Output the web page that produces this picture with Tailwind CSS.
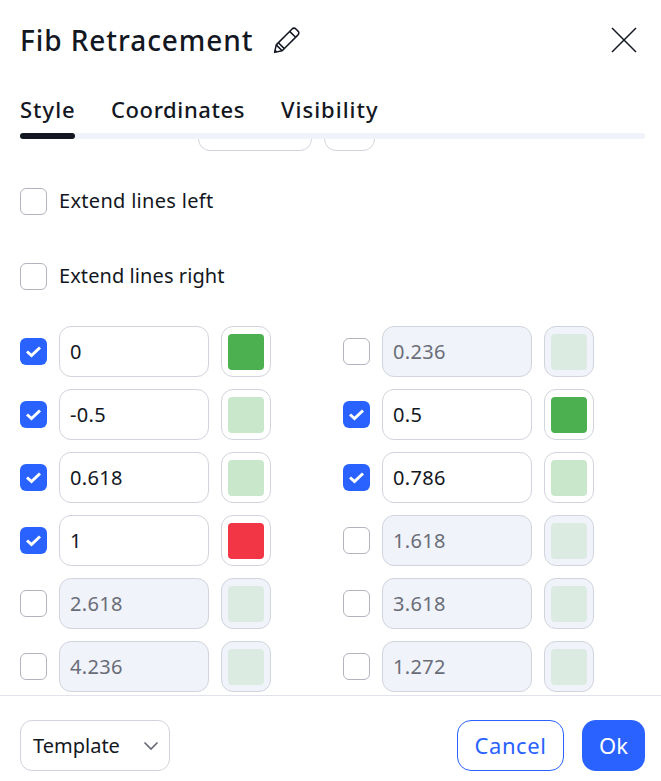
<!doctype html>
<html lang="en">
  <head>
    <meta charset="UTF-8" />
    <title>Fib Retracement</title>
    <script src="https://cdn.jsdelivr.net/npm/@tailwindcss/browser@4"></script>
  </head>
  <body class="bg-white">
    <div class="w-[661px] h-[781px] flex flex-col overflow-hidden bg-white text-[#131722] font-['Noto_Sans',sans-serif]">
      <header class="h-[80px] pl-[20px] pr-[24px] flex items-center shrink-0">
        <h1 class="text-[28px] font-medium tracking-[0.93px]">Fib Retracement</h1>
        <svg class="ml-[20px]" width="28" height="28" viewBox="0 0 26 26" fill="none" stroke="#131722" stroke-width="1.4" stroke-linejoin="round">
          <path d="M1.5 24.5 L3 17.5 L17.5 3 Q19.5 1 21.5 3 L23 4.5 Q25 6.5 23 8.5 L8.5 23 Z" />
          <path d="M3 17.5 L8.5 23 M5 15.5 L10.5 21 M15.5 5 L21 10.5 M1.9 22.5 L3.5 24.1" />
        </svg>
        <svg class="ml-auto" width="26" height="26" viewBox="0 0 26 26" fill="none" stroke="#131722" stroke-width="1.5">
          <path d="M1 1 L25 25 M25 1 L1 25" />
        </svg>
      </header>

      <nav class="shrink-0 pl-[20px] pr-[16px]">
        <div class="flex gap-[36px] h-[53px] pt-[11px] text-[22px] font-medium leading-[36px] tracking-[0.6px]">
          <a class="w-[55px] tracking-[1px]">Style</a>
          <a class="w-[134px]">Coordinates</a>
          <a class="tracking-[1px]">Visibility</a>
        </div>
        <div class="h-[6px] rounded-full bg-[#f0f3fa]">
          <div class="h-full w-[55px] rounded-full bg-[#131722]"></div>
        </div>
      </nav>

      <main class="flex-1 min-h-0 overflow-hidden px-[20px] text-[20px] tracking-[0.3px]">
        <div class="flex gap-[12px] ml-[178px] -mt-[39px] h-[51px]">
          <div class="w-[114px] rounded-[12px] border border-[#d1d4dc]"></div>
          <div class="w-[51px] rounded-[12px] border border-[#d1d4dc]"></div>
        </div>

        <label class="flex items-center gap-[12px] mt-[37px] h-[27px]">
          <span class="w-[27px] h-[27px] rounded-[6px] border border-[#b2b5be] bg-white"></span>
          <span class="pb-[2px]">Extend lines left</span>
        </label>
        <label class="flex items-center gap-[12px] mt-[48px] h-[27px]">
          <span class="w-[27px] h-[27px] rounded-[6px] border border-[#b2b5be] bg-white"></span>
          <span class="pb-[2px] tracking-[0.08px]">Extend lines right</span>
        </label>

        <div class="grid grid-cols-[323px_1fr] gap-y-[12px] mt-[36px]">
          <div class="flex items-center gap-[12px]">
            <span class="w-[27px] h-[27px] rounded-[6px] bg-[#2962ff] flex items-center justify-center">
              <svg width="17" height="13" viewBox="0 0 17 13" fill="none" stroke="white" stroke-width="3"><path d="M2 6.5 L6.5 10.5 L15 2.5" /></svg>
            </span>
            <div class="w-[150px] h-[51px] px-[10px] flex items-center rounded-[12px] border border-[#d1d4dc]">0</div>
            <div class="w-[50px] h-[51px] flex items-center justify-center rounded-[12px] border border-[#d1d4dc]"><span class="w-[36px] h-[36px] rounded-[4px] bg-[#4caf50]"></span></div>
          </div>
          <div class="flex items-center gap-[12px]">
            <span class="w-[27px] h-[27px] rounded-[6px] border border-[#b2b5be] bg-white"></span>
            <div class="w-[150px] h-[51px] px-[10px] flex items-center rounded-[12px] border border-[#d1d4dc] bg-[#f0f3fa] text-[#6a6d78]">0.236</div>
            <div class="w-[50px] h-[51px] flex items-center justify-center rounded-[12px] border border-[#d1d4dc] bg-[#f0f3fa]"><span class="w-[36px] h-[36px] rounded-[4px] bg-[#dcebe1]"></span></div>
          </div>

          <div class="flex items-center gap-[12px]">
            <span class="w-[27px] h-[27px] rounded-[6px] bg-[#2962ff] flex items-center justify-center">
              <svg width="17" height="13" viewBox="0 0 17 13" fill="none" stroke="white" stroke-width="3"><path d="M2 6.5 L6.5 10.5 L15 2.5" /></svg>
            </span>
            <div class="w-[150px] h-[51px] px-[10px] flex items-center rounded-[12px] border border-[#d1d4dc]">-0.5</div>
            <div class="w-[50px] h-[51px] flex items-center justify-center rounded-[12px] border border-[#d1d4dc]"><span class="w-[36px] h-[36px] rounded-[4px] bg-[#c9e7cb]"></span></div>
          </div>
          <div class="flex items-center gap-[12px]">
            <span class="w-[27px] h-[27px] rounded-[6px] bg-[#2962ff] flex items-center justify-center">
              <svg width="17" height="13" viewBox="0 0 17 13" fill="none" stroke="white" stroke-width="3"><path d="M2 6.5 L6.5 10.5 L15 2.5" /></svg>
            </span>
            <div class="w-[150px] h-[51px] px-[10px] flex items-center rounded-[12px] border border-[#d1d4dc]">0.5</div>
            <div class="w-[50px] h-[51px] flex items-center justify-center rounded-[12px] border border-[#d1d4dc]"><span class="w-[36px] h-[36px] rounded-[4px] bg-[#4caf50]"></span></div>
          </div>

          <div class="flex items-center gap-[12px]">
            <span class="w-[27px] h-[27px] rounded-[6px] bg-[#2962ff] flex items-center justify-center">
              <svg width="17" height="13" viewBox="0 0 17 13" fill="none" stroke="white" stroke-width="3"><path d="M2 6.5 L6.5 10.5 L15 2.5" /></svg>
            </span>
            <div class="w-[150px] h-[51px] px-[10px] flex items-center rounded-[12px] border border-[#d1d4dc]">0.618</div>
            <div class="w-[50px] h-[51px] flex items-center justify-center rounded-[12px] border border-[#d1d4dc]"><span class="w-[36px] h-[36px] rounded-[4px] bg-[#c9e7cb]"></span></div>
          </div>
          <div class="flex items-center gap-[12px]">
            <span class="w-[27px] h-[27px] rounded-[6px] bg-[#2962ff] flex items-center justify-center">
              <svg width="17" height="13" viewBox="0 0 17 13" fill="none" stroke="white" stroke-width="3"><path d="M2 6.5 L6.5 10.5 L15 2.5" /></svg>
            </span>
            <div class="w-[150px] h-[51px] px-[10px] flex items-center rounded-[12px] border border-[#d1d4dc]">0.786</div>
            <div class="w-[50px] h-[51px] flex items-center justify-center rounded-[12px] border border-[#d1d4dc]"><span class="w-[36px] h-[36px] rounded-[4px] bg-[#c9e7cb]"></span></div>
          </div>

          <div class="flex items-center gap-[12px]">
            <span class="w-[27px] h-[27px] rounded-[6px] bg-[#2962ff] flex items-center justify-center">
              <svg width="17" height="13" viewBox="0 0 17 13" fill="none" stroke="white" stroke-width="3"><path d="M2 6.5 L6.5 10.5 L15 2.5" /></svg>
            </span>
            <div class="w-[150px] h-[51px] px-[10px] flex items-center rounded-[12px] border border-[#d1d4dc]">1</div>
            <div class="w-[50px] h-[51px] flex items-center justify-center rounded-[12px] border border-[#d1d4dc]"><span class="w-[36px] h-[36px] rounded-[4px] bg-[#f23645]"></span></div>
          </div>
          <div class="flex items-center gap-[12px]">
            <span class="w-[27px] h-[27px] rounded-[6px] border border-[#b2b5be] bg-white"></span>
            <div class="w-[150px] h-[51px] px-[10px] flex items-center rounded-[12px] border border-[#d1d4dc] bg-[#f0f3fa] text-[#6a6d78]">1.618</div>
            <div class="w-[50px] h-[51px] flex items-center justify-center rounded-[12px] border border-[#d1d4dc] bg-[#f0f3fa]"><span class="w-[36px] h-[36px] rounded-[4px] bg-[#dcebe1]"></span></div>
          </div>

          <div class="flex items-center gap-[12px]">
            <span class="w-[27px] h-[27px] rounded-[6px] border border-[#b2b5be] bg-white"></span>
            <div class="w-[150px] h-[51px] px-[10px] flex items-center rounded-[12px] border border-[#d1d4dc] bg-[#f0f3fa] text-[#6a6d78]">2.618</div>
            <div class="w-[50px] h-[51px] flex items-center justify-center rounded-[12px] border border-[#d1d4dc] bg-[#f0f3fa]"><span class="w-[36px] h-[36px] rounded-[4px] bg-[#dcebe1]"></span></div>
          </div>
          <div class="flex items-center gap-[12px]">
            <span class="w-[27px] h-[27px] rounded-[6px] border border-[#b2b5be] bg-white"></span>
            <div class="w-[150px] h-[51px] px-[10px] flex items-center rounded-[12px] border border-[#d1d4dc] bg-[#f0f3fa] text-[#6a6d78]">3.618</div>
            <div class="w-[50px] h-[51px] flex items-center justify-center rounded-[12px] border border-[#d1d4dc] bg-[#f0f3fa]"><span class="w-[36px] h-[36px] rounded-[4px] bg-[#dcebe1]"></span></div>
          </div>

          <div class="flex items-center gap-[12px]">
            <span class="w-[27px] h-[27px] rounded-[6px] border border-[#b2b5be] bg-white"></span>
            <div class="w-[150px] h-[51px] px-[10px] flex items-center rounded-[12px] border border-[#d1d4dc] bg-[#f0f3fa] text-[#6a6d78]">4.236</div>
            <div class="w-[50px] h-[51px] flex items-center justify-center rounded-[12px] border border-[#d1d4dc] bg-[#f0f3fa]"><span class="w-[36px] h-[36px] rounded-[4px] bg-[#dcebe1]"></span></div>
          </div>
          <div class="flex items-center gap-[12px]">
            <span class="w-[27px] h-[27px] rounded-[6px] border border-[#b2b5be] bg-white"></span>
            <div class="w-[150px] h-[51px] px-[10px] flex items-center rounded-[12px] border border-[#d1d4dc] bg-[#f0f3fa] text-[#6a6d78]">1.272</div>
            <div class="w-[50px] h-[51px] flex items-center justify-center rounded-[12px] border border-[#d1d4dc] bg-[#f0f3fa]"><span class="w-[36px] h-[36px] rounded-[4px] bg-[#dcebe1]"></span></div>
          </div>
        </div>
      </main>

      <footer class="shrink-0 h-[86px] border-t border-[#e0e3eb] px-[16px] pl-[20px] pb-[10px] flex items-end text-[20px]">
        <div class="w-[150px] h-[51px] pl-[12px] pr-[10px] flex items-center justify-between rounded-[12px] border border-[#d1d4dc]">
          <span>Template</span>
          <svg width="16" height="10" viewBox="0 0 16 10" fill="none" stroke="#6a6d78" stroke-width="1.7"><path d="M1.5 1.5 L8 8 L14.5 1.5" /></svg>
        </div>
        <button class="ml-auto w-[107px] h-[51px] rounded-[14px] border border-[#2962ff] text-[#2962ff] text-[22px] tracking-[0.6px]">Cancel</button>
        <button class="ml-[18px] w-[63px] h-[51px] rounded-[14px] bg-[#2962ff] text-white text-[22px]">Ok</button>
      </footer>
    </div>
  </body>
</html>
